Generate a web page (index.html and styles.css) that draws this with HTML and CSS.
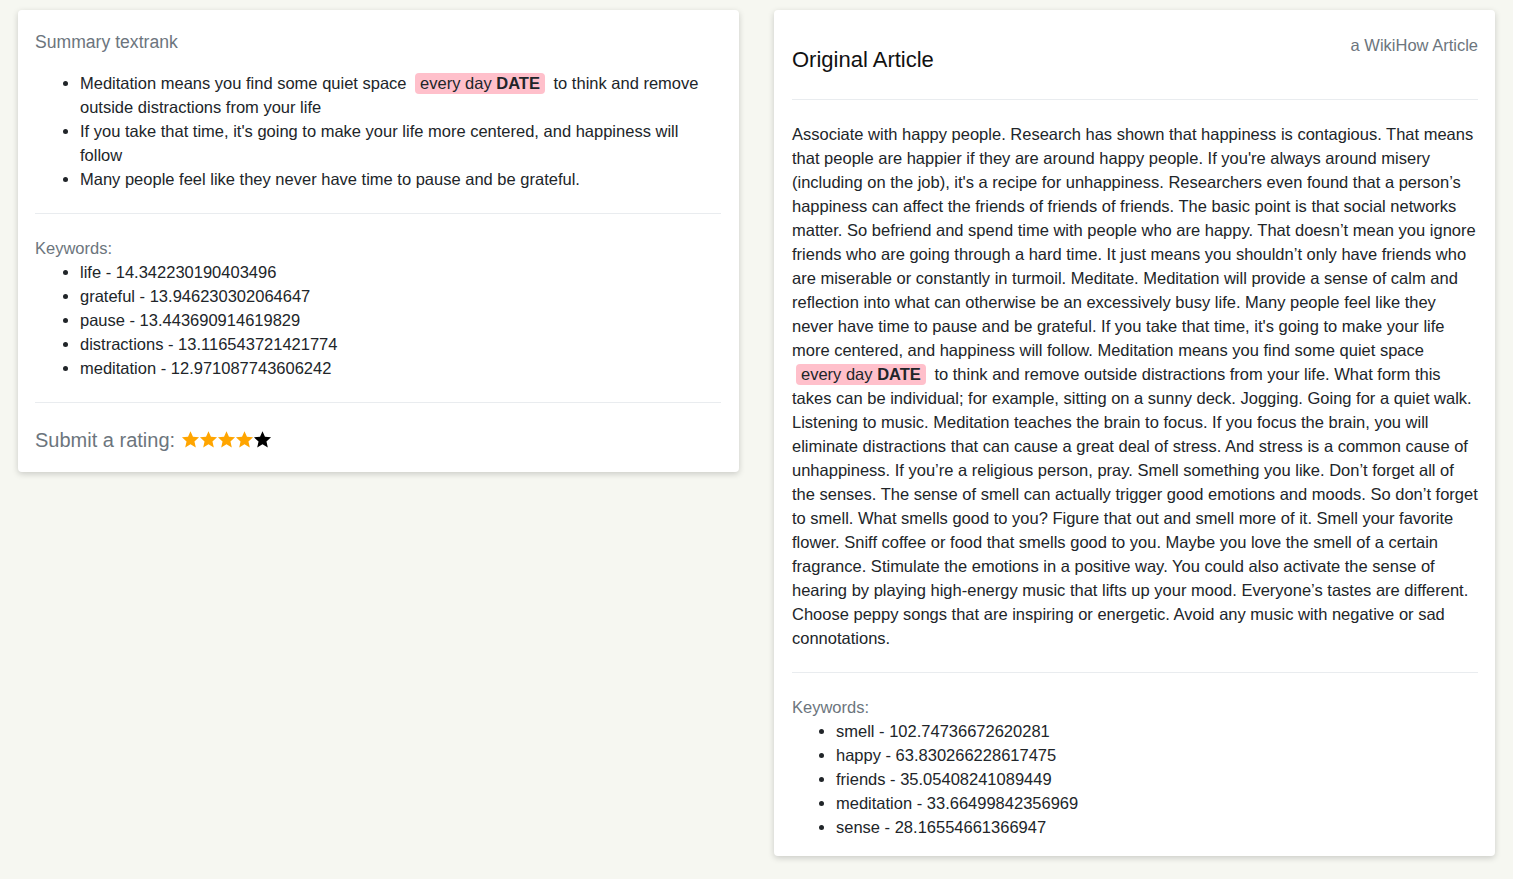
FILE: index.html
```html
<!DOCTYPE html>
<html>
<head>
<meta charset="utf-8">
<link rel="stylesheet" href="styles.css">
</head>
<body>
<div class="page">
  <div class="card card-left">
    <h5 class="muted title-sm">Summary textrank</h5>
    <ul class="list summary">
      <li>Meditation means you find some quiet space <mark class="tag">every day <b>DATE</b></mark> to think and remove outside distractions from your life</li>
      <li>If you take that time, it's going to make your life more centered, and happiness will follow</li>
      <li>Many people feel like they never have time to pause and be grateful.</li>
    </ul>
    <hr>
    <div class="muted">Keywords:</div>
    <ul class="list">
      <li>life - 14.342230190403496</li>
      <li>grateful - 13.946230302064647</li>
      <li>pause - 13.443690914619829</li>
      <li>distractions - 13.116543721421774</li>
      <li>meditation - 12.971087743606242</li>
    </ul>
    <hr>
    <div class="rating muted">Submit a rating: <span class="stars"><svg class="star on" viewBox="0 0 24 24"><path d="M12 1.5l3.1 7.1 7.7.7-5.8 5.1 1.7 7.6L12 18l-6.7 4 1.7-7.6-5.8-5.1 7.7-.7z"/></svg><svg class="star on" viewBox="0 0 24 24"><path d="M12 1.5l3.1 7.1 7.7.7-5.8 5.1 1.7 7.6L12 18l-6.7 4 1.7-7.6-5.8-5.1 7.7-.7z"/></svg><svg class="star on" viewBox="0 0 24 24"><path d="M12 1.5l3.1 7.1 7.7.7-5.8 5.1 1.7 7.6L12 18l-6.7 4 1.7-7.6-5.8-5.1 7.7-.7z"/></svg><svg class="star on" viewBox="0 0 24 24"><path d="M12 1.5l3.1 7.1 7.7.7-5.8 5.1 1.7 7.6L12 18l-6.7 4 1.7-7.6-5.8-5.1 7.7-.7z"/></svg><svg class="star off" viewBox="0 0 24 24"><path d="M12 1.5l3.1 7.1 7.7.7-5.8 5.1 1.7 7.6L12 18l-6.7 4 1.7-7.6-5.8-5.1 7.7-.7z"/></svg></span></div>
  </div>
  <div class="card card-right">
    <div class="head">
      <h4 class="title-lg">Original Article</h4>
      <div class="muted source">a WikiHow Article</div>
    </div>
    <hr class="hr-head">
    <p class="article">Associate with happy people. Research has shown that happiness is contagious. That means that people are happier if they are around happy people. If you're always around misery (including on the job), it's a recipe for unhappiness. Researchers even found that a person’s happiness can affect the friends of friends of friends. The basic point is that social networks matter. So befriend and spend time with people who are happy. That doesn’t mean you ignore friends who are going through a hard time. It just means you shouldn’t only have friends who are miserable or constantly in turmoil. Meditate. Meditation will provide a sense of calm and reflection into what can otherwise be an excessively busy life. Many people feel like they never have time to pause and be grateful. If you take that time, it's going to make your life more centered, and happiness will follow. Meditation means you find some quiet space <mark class="tag">every day <b>DATE</b></mark> to think and remove outside distractions from your life. What form this takes can be individual; for example, sitting on a sunny deck. Jogging. Going for a quiet walk. Listening to music. Meditation teaches the brain to focus. If you focus the brain, you will eliminate distractions that can cause a great deal of stress. And stress is a common cause of unhappiness. If you’re a religious person, pray. Smell something you like. Don’t forget all of the senses. The sense of smell can actually trigger good emotions and moods. So don’t forget to smell. What smells good to you? Figure that out and smell more of it. Smell your favorite flower. Sniff coffee or food that smells good to you. Maybe you love the smell of a certain fragrance. Stimulate the emotions in a positive way. You could also activate the sense of hearing by playing high-energy music that lifts up your mood. Everyone’s tastes are different. Choose peppy songs that are inspiring or energetic. Avoid any music with negative or sad connotations.</p>
    <hr>
    <div class="muted">Keywords:</div>
    <ul class="list">
      <li>smell - 102.74736672620281</li>
      <li>happy - 63.830266228617475</li>
      <li>friends - 35.05408241089449</li>
      <li>meditation - 33.66499842356969</li>
      <li>sense - 28.16554661366947</li>
    </ul>
  </div>
</div>
</body>
</html>
```

FILE: styles.css
```css
html, body {
  margin: 0;
  padding: 0;
}
body {
  background: #f6f7f1;
  font-family: "Liberation Sans", Arial, sans-serif;
  font-size: 16.5px;
  line-height: 24px;
  color: #212529;
}
.page {
  display: grid;
  grid-template-columns: 721px 721px;
  column-gap: 35px;
  align-items: start;
  padding: 10px 18px;
}
.card {
  background: #fff;
  border-radius: 4px;
  box-shadow: 0 2px 6px rgba(0, 0, 0, 0.18);
  padding: 20px 18px 19px 17px;
}
.card-right {
  padding: 20px 17px 17px 18px;
}
.muted {
  color: #6c757d;
}
.title-sm {
  margin: 0 0 17px;
  font-size: 17.6px;
  font-weight: normal;
  line-height: 24px;
}
.list {
  margin: 0;
  padding-left: 45px;
}
.card-right .list {
  padding-left: 44px;
}
hr {
  border: 0;
  border-top: 1px solid #e9ecef;
  margin: 22px 0;
}
.tag {
  display: inline-block;
  line-height: normal;
  background: #ffc0cb;
  color: #212529;
  border-radius: 4px;
  padding: 1px 5px;
  margin: 0 4px;
}
.tag b {
  font-weight: bold;
}
.rating {
  font-size: 20px;
  line-height: 26px;
  margin-top: 24px;
}
.stars {
  display: inline-flex;
  vertical-align: -2px;
}
.star {
  width: 19px;
  height: 19px;
  margin-right: -0.8px;
}
.star.on {
  fill: #ffa500;
}
.star.off {
  fill: #000;
}
.head {
  display: flex;
  justify-content: space-between;
  align-items: flex-start;
}
.title-lg {
  margin: 16px 0 0;
  font-size: 22px;
  font-weight: normal;
  line-height: 28px;
  color: #111;
}
.source {
  margin-top: 3px;
}
.hr-head {
  margin: 25px 0 22px;
}
.article {
  margin: 0;
}
```
